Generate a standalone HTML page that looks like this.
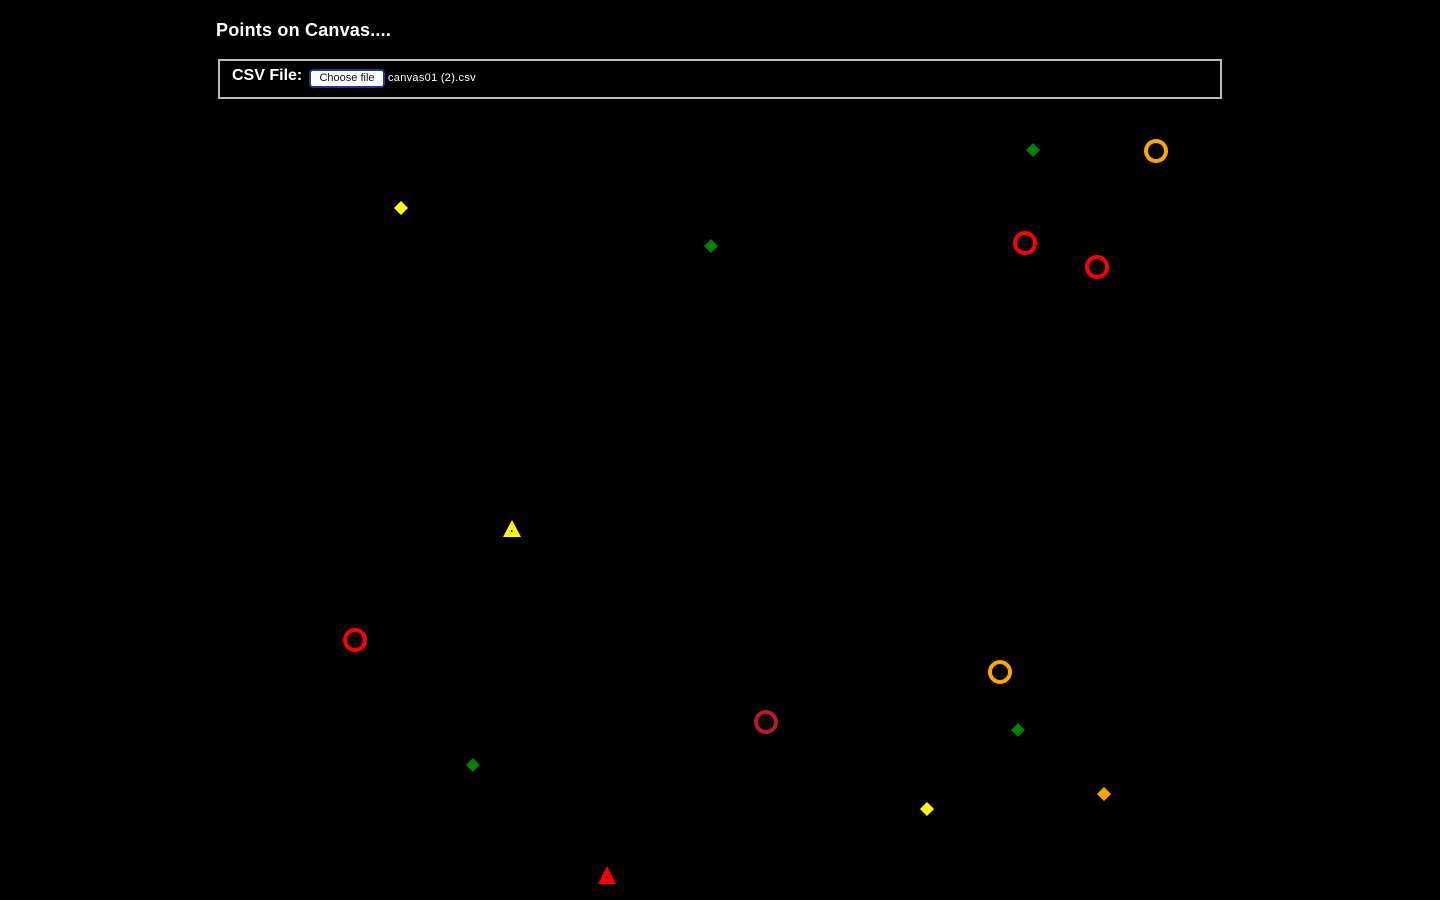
<!DOCTYPE html>
<html><head><meta charset="utf-8"><style>
html,body{margin:0;padding:0;background:#000;width:1440px;height:900px;overflow:hidden;font-family:"Liberation Sans",Arial,sans-serif;color:#fff}
h1{position:absolute;left:216px;top:20px;margin:0;font-size:18px;font-weight:bold;letter-spacing:0.2px}
.box{position:absolute;left:218px;top:59px;width:1000px;height:36px;border:2px solid #bbb}
.lbl{position:absolute;left:12px;top:6px;font-size:16px;font-weight:bold}
.btn{position:absolute;left:89px;top:8px;width:72px;height:15px;background:#fff;border:2px solid #1a3a8a;border-radius:4px;color:#111;font-size:11px;line-height:15px;text-align:center}
.fn{position:absolute;left:168px;top:11px;font-size:11px;letter-spacing:0.3px}
svg{position:absolute;left:0;top:0}
</style></head><body>
<h1>Points on Canvas....</h1>
<div class="box"><span class="lbl">CSV File:</span><span class="btn">Choose file</span><span class="fn">canvas01 (2).csv</span></div>
<svg width="1440" height="900">
<g fill="none" stroke-width="4">
<circle cx="1156" cy="151" r="10" stroke="#ffa500"/>
<circle cx="1025" cy="243" r="10" stroke="#f00"/>
<circle cx="1097" cy="267" r="10" stroke="#f00"/>
<circle cx="355" cy="640" r="10" stroke="#f00"/>
<circle cx="1000" cy="672" r="10" stroke="#ffa500"/>
<circle cx="766" cy="722" r="10" stroke="#b81c24"/>
</g>
<g>
<polygon points="1033,143 1040,150 1033,157 1026,150" fill="#008000"/>
<polygon points="401,201 408,208 401,215 394,208" fill="#ff0"/>
<polygon points="711,239 718,246 711,253 704,246" fill="#008000"/>
<polygon points="1018,723 1025,730 1018,737 1011,730" fill="#008000"/>
<polygon points="473,758 480,765 473,772 466,765" fill="#008000"/>
<polygon points="1104,787 1111,794 1104,801 1097,794" fill="#ffa500"/>
<polygon points="927,802 934,809 927,816 920,809" fill="#ff0"/>
<polygon points="512,520 521,537 503,537" fill="#ff0"/>
<polygon points="607,866 616,884 598,884" fill="#f00"/>
<rect x="511" y="530" width="1.5" height="2" fill="#000"/>
<rect x="606" y="876" width="1.5" height="2" fill="#000"/>
</g>
</svg>
</body></html>
